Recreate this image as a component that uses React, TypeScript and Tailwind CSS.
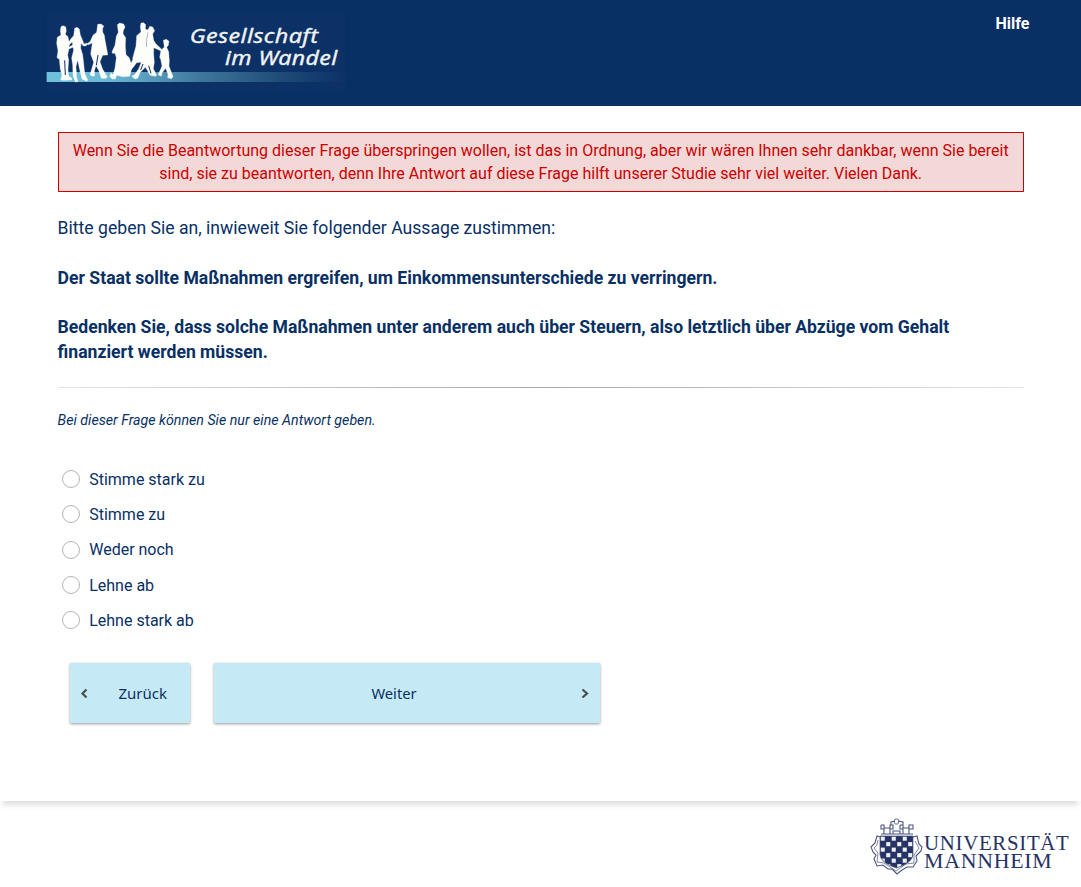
import React from "react";

const answers = ["Stimme stark zu", "Stimme zu", "Weder noch", "Lehne ab", "Lehne stark ab"];

function Logo() {
  return (
    <svg className="block h-[84px] w-[310px]" viewBox="0 0 930 252" role="img" aria-label="Gesellschaft im Wandel">
      <defs>
        <linearGradient id="stripe" x1="0" x2="1">
          <stop offset="0" stopColor="#6fc2dc" />
          <stop offset="0.2" stopColor="#6bbad5" />
          <stop offset="0.5" stopColor="#417a9f" />
          <stop offset="0.8" stopColor="#1c4975" />
          <stop offset="1" stopColor="#0d3167" />
        </linearGradient>
      </defs>
      <rect x="20" y="6" width="897" height="242" fill="#0c3167" />
      <rect x="20" y="186" width="897" height="30" fill="url(#stripe)" />
      <g fill="#fdfdf9" stroke="#fdfdf9" strokeWidth="1" strokeLinejoin="round">
        <path d="M63 50 L69 47 L77 50 L79 63 L76 73 L84 80 L87 96 L88 112 L83 135 L86 150 L84 180 L86 199 L96 205 L94 210 L70 211 L62 210 L66 195 L61 178 L58 148 L51 143 L54 122 L50 100 L52 82 L63 75 L61 62Z" />
        <path d="M104 55 L111 52 L118 57 L121 75 L125 84 L132 102 L142 99 L139 107 L130 108 L123 100 L122 115 L128 134 L131 160 L134 190 L143 209 L141 214 L132 210 L126 207 L118 175 L113 150 L108 170 L110 202 L114 215 L106 216 L99 197 L98 165 L95 144 L101 120 L99 112 L86 117 L84 113 L98 105 L97 96 L88 104 L84 99 L94 85 L101 77Z" />
        <path d="M173 43 L183 42 L192 49 L188 54 L188 66 L193 76 L195 90 L202 127 L203 135 L188 136 L180 155 L188 178 L202 200 L198 205 L184 205 L176 181 L168 167 L163 183 L164 197 L158 199 L150 195 L156 174 L161 157 L152 132 L157 99 L145 104 L140 103 L151 94 L159 76 L170 67Z" />
        <path d="M232 44 L239 39 L251 42 L255 51 L250 62 L249 71 L257 83 L256 108 L258 134 L268 143 L273 160 L277 151 L282 157 L275 172 L273 184 L269 199 L248 200 L230 196 L226 207 L217 207 L209 200 L213 188 L219 195 L225 174 L229 143 L225 130 L217 130 L216 125 L225 106 L229 79 L235 67Z" />
        <path d="M303 39 L311 38 L317 44 L316 57 L324 60 L329 49 L338 51 L344 62 L338 72 L341 91 L348 102 L358 111 L366 119 L364 124 L352 118 L341 113 L341 134 L343 157 L340 176 L350 196 L346 199 L330 196 L322 181 L316 172 L301 187 L293 205 L285 207 L275 199 L285 193 L296 176 L304 157 L290 158 L281 170 L274 179 L270 174 L279 158 L278 145 L288 108 L290 77 L303 66 L301 50Z" />
        <path d="M370 91 L379 88 L387 94 L385 106 L380 112 L386 125 L388 153 L387 168 L399 200 L394 206 L383 203 L384 193 L377 175 L366 189 L364 199 L354 194 L361 180 L366 168 L362 148 L359 142 L363 121 L373 111Z" />
      </g>
      <g stroke="#0c3167" fill="none" strokeWidth="3">
        <path d="M74 151 L76 195 M174 135 L169 166 M309 162 L302 180 M326 167 L333 190" />
        <path d="M324 67 L319 92 L320 111" strokeWidth="1" />
      </g>
      <g fill="#f1f3f1" stroke="#f1f3f1" strokeWidth="1" fontFamily="'Noto Sans', sans-serif" fontStyle="italic" fontSize="62" letterSpacing="1">
        <text x="449" y="98" textLength="386" lengthAdjust="spacingAndGlyphs">Gesellschaft</text>
        <text x="555" y="166" textLength="338" lengthAdjust="spacingAndGlyphs">im Wandel</text>
      </g>
    </svg>
  );
}

function University() {
  return (
    <svg className="block h-[70px] w-[216px]" viewBox="0 0 216 70" role="img" aria-label="Universität Mannheim">
      <defs>
        <clipPath id="shield">
          <path d="M15 26H48V45Q47 53 31.500 58Q16 53 15 45Z" />
        </clipPath>
      </defs>
      <g clipPath="url(#shield)">
        <rect x="15" y="26" width="33" height="33" fill="#263365" />
        {[0, 1, 2, 3, 4, 5].flatMap((row) =>
          [0, 1, 2, 3, 4, 5].filter((col) => (row + col) % 2 === 0).map((col) => (
            <rect key={`${row}-${col}`} x={15.7 + col * 5.5} y={26.6 + row * 5.5} width="4.1" height="4.1" fill="#eceef3" />
          )),
        )}
      </g>
      <g fill="none" stroke="#4b5580" strokeWidth="1.1">
        <path d="M15 26H48V45Q47 53 31.500 58Q16 53 15 45Z" strokeWidth=".7" />
        <path d="M15 27 L12 26 L10 33 L6 37 L8 42 L11 45 L9 49 L12 56 L18 55 L23 59 L27 59 L32 64 L37 60 L42 57 L48 57 L52 51 L51 46 L56 41 L57 37 L54 34 L52 26 L48 27" />
        <path d="M13 30 L12 35 L9 38 L13 43 L12 52 L19 53 L31 61 L41 54 L49 53 L49 45 L54 38 L50 31" strokeWidth=".7" />
        <path d="M16 15 H19 V18 H25 V15 H28 V19 H25 V24 M19 18 V24 M16 15 V19 H19 M35 15 H38 V18 H44 V15 H48 V19 H44 V24 M38 18 V24 M35 15 V19 H38 M26 15 V12 L30 11 M33 11 L38 12 V15 M28 24 V21 H35 V24 M16 24 H48" />
        <path d="M30 9 L33 9 L34 11 L33 14 H30 L29 12Z" strokeWidth=".8" />
      </g>
      <g fill="#263365" fontFamily="'Liberation Serif', serif" fontSize="20.5" letterSpacing=".7">
        <text x="59" y="40" textLength="145.5" lengthAdjust="spacingAndGlyphs">UNIVERSITÄT</text>
        <text x="59" y="58" textLength="128.5" lengthAdjust="spacingAndGlyphs">MANNHEIM</text>
      </g>
    </svg>
  );
}

function Chevron({ right = false }: { right?: boolean }) {
  return (
    <svg className="h-[10px] w-[8px]" viewBox="0 0 8 10" fill="none" stroke="#4c4c4c" strokeWidth="2.2">
      <path d={right ? "M1.500 1.500L6 5.500L1.500 9.500" : "M6.500 1.500L2.500 5.500L6.500 9.500"} />
    </svg>
  );
}

export default function App() {
  return (
    <div className="flex h-[887px] flex-col overflow-hidden bg-white font-['Roboto',sans-serif] text-[#083064]">
      <div className="h-[801px] shrink-0 bg-white shadow-[0_7px_6px_-3px_#dedede]">
        <header className="flex h-[106px] items-start justify-between bg-[#083064] pt-[10px] pr-[51.5px] pl-[40px]">
          <Logo />
          <a className="pt-[2px] text-base font-bold text-white" href="#">Hilfe</a>
        </header>
        <main className="pt-[26px] pr-[57.2px] pl-[57.6px]">
          <div className="h-[60px] border border-[#cc0000] bg-[#f3d8d8] px-3 pt-[6px] text-center text-base leading-[23px] text-[#cc0000]">
            Wenn Sie die Beantwortung dieser Frage überspringen wollen, ist das in Ordnung, aber wir wären Ihnen sehr dankbar, wenn Sie bereit sind, sie zu beantworten, denn Ihre Antwort auf diese Frage hilft unserer Studie sehr viel weiter. Vielen Dank.
          </div>
          <div className="mt-[24px] h-[171px] text-[17.6px] leading-[24.75px]">
            <p>Bitte geben Sie an, inwieweit Sie folgender Aussage zustimmen:</p>
            <p className="mt-[25px] font-bold">Der Staat sollte Maßnahmen ergreifen, um Einkommensunterschiede zu verringern.</p>
            <p className="mt-[24.5px] font-bold">Bedenken Sie, dass solche Maßnahmen unter anderem auch über Steuern, also letztlich über Abzüge vom Gehalt finanziert werden müssen.</p>
          </div>
          <div className="h-px bg-linear-to-r from-[#e4e4e4] via-[#a8a8a8] to-[#e4e4e4]" />
          <p className="mt-[22px] text-[14.2px] leading-5 italic">Bei dieser Frage können Sie nur eine Antwort geben.</p>
          <div className="mt-[32.2px] flex flex-col">
            {answers.map((answer) => (
              <label key={answer} className="flex h-[35.25px] items-center gap-[9px] pl-[4.6px] text-base">
                <input name="answer" type="radio" className="mb-[1.2px] h-[18px] w-[18px] appearance-none rounded-full border border-[#b5b5b5] bg-white" />
                {answer}
              </label>
            ))}
          </div>
          <div className="mt-[24.8px] flex gap-[24px] pl-[12.4px] font-['Noto_Sans',sans-serif] text-[15px]">
            <button className="flex h-[60px] w-[120px] items-center rounded-[1px] bg-[#c5e9f5] pl-[10.5px] shadow-[0_1px_3px_#999]">
              <Chevron />
              <span className="ml-[30px]">Zurück</span>
            </button>
            <button className="flex h-[60px] w-[386px] items-center rounded-[1px] bg-[#c5e9f5] pr-[10.5px] shadow-[0_1px_3px_#999]">
              <span className="flex-1 pr-[7.5px] text-center text-[14.7px]">Weiter</span>
              <Chevron right />
            </button>
          </div>
        </main>
      </div>
      <footer className="flex justify-end pt-[9px]">
        <University />
      </footer>
    </div>
  );
}
